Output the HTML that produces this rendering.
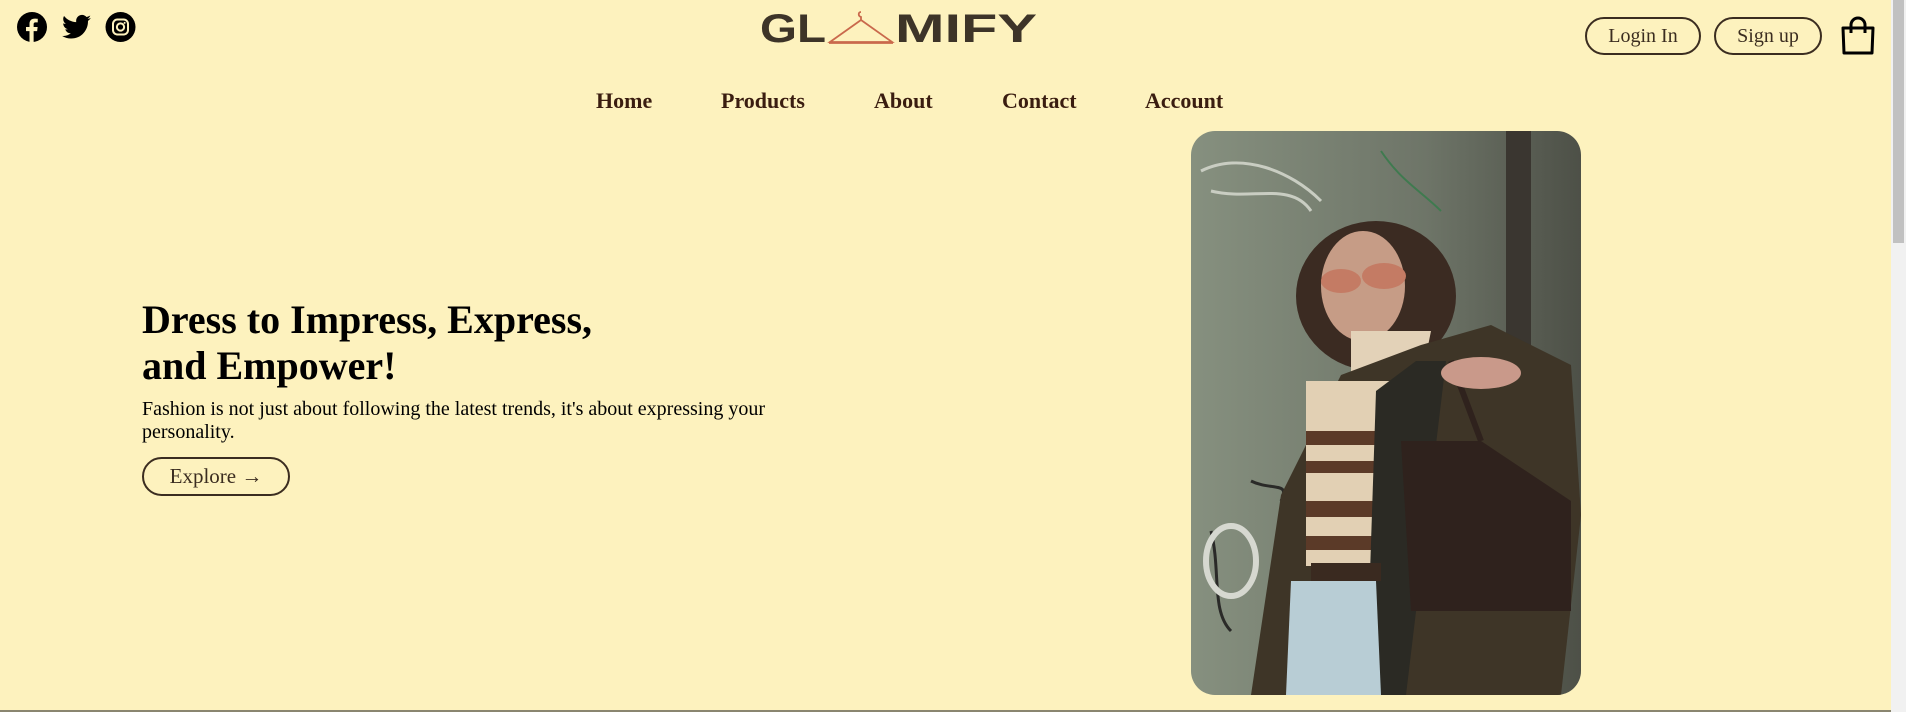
<!DOCTYPE html>
<html><head><meta charset="utf-8"><style>
*{margin:0;padding:0;box-sizing:border-box}
html,body{width:1906px;height:712px;overflow:hidden;background:#fdf2be;font-family:"Liberation Serif",serif;position:relative}
.abs{position:absolute}
.btn{position:absolute;border:2px solid #3b2d20;border-radius:20px;font-size:20px;color:#3b2d20;display:flex;align-items:center;justify-content:center}
.nav a{position:absolute;top:88px;font-weight:bold;font-size:22px;color:#3a1d10;text-decoration:none}
</style></head><body>
<svg class="abs" style="left:17px;top:12px" width="30" height="30" viewBox="0 0 24 24"><circle cx="12" cy="12" r="12" fill="#000"/><path d="M13.3 24v-8.7h2.8l.4-3.3h-3.2V9.9c0-.9.3-1.6 1.6-1.6h1.7V5.4c-.3 0-1.3-.1-2.5-.1-2.5 0-4.1 1.5-4.1 4.2V12H7.2v3.3H10V24z" fill="#fdf2be"/></svg>
<svg class="abs" style="left:62px;top:14px" width="29" height="26" viewBox="0 0 24 20"><path d="M24 2.4c-.9.4-1.8.7-2.8.8 1-.6 1.8-1.6 2.2-2.7-1 .6-2 1-3.1 1.2C19.3.7 18 0 16.6 0c-2.7 0-4.9 2.2-4.9 4.9 0 .4 0 .8.1 1.1C7.7 5.8 4.1 3.9 1.7.9c-.4.7-.7 1.6-.7 2.5 0 1.7.9 3.2 2.2 4.1-.8 0-1.6-.2-2.2-.6v.1c0 2.4 1.7 4.4 3.9 4.8-.4.1-.8.2-1.3.2-.3 0-.6 0-.9-.1.6 2 2.4 3.4 4.6 3.4-1.7 1.3-3.8 2.1-6.1 2.1-.4 0-.8 0-1.2-.1 2.2 1.4 4.8 2.2 7.5 2.2 9.1 0 14-7.5 14-14v-.6c1-.7 1.8-1.6 2.5-2.5z" fill="#000"/></svg>
<svg class="abs" style="left:105px;top:12px" width="31" height="30" viewBox="0 0 24 24"><circle cx="12" cy="12" r="12" fill="#000"/><rect x="6" y="6" width="12" height="12" rx="3.5" fill="none" stroke="#fdf2be" stroke-width="1.6"/><circle cx="12" cy="12" r="2.9" fill="none" stroke="#fdf2be" stroke-width="1.6"/><circle cx="15.3" cy="8.7" r=".8" fill="#fdf2be"/></svg>
<svg class="abs" style="left:755px;top:8px" width="290" height="40" viewBox="0 0 290 40">
<text x="5" y="34" font-family="Liberation Sans,sans-serif" font-weight="bold" font-size="40" fill="#3d3428" textLength="66" lengthAdjust="spacingAndGlyphs">GL</text>
<path d="M106 4c-3 0-3 4 0 5v3M106 12L75 34h62z M74 35h64" fill="none" stroke="#c9694c" stroke-width="1.8"/>
<text x="140" y="34" font-family="Liberation Sans,sans-serif" font-weight="bold" font-size="40" fill="#3d3428" textLength="142" lengthAdjust="spacingAndGlyphs">MIFY</text>
</svg>
<div class="btn" style="left:1585px;top:17px;width:116px;height:38px">Login In</div>
<div class="btn" style="left:1714px;top:17px;width:108px;height:38px">Sign up</div>
<svg class="abs" style="left:1840px;top:16px" width="36" height="40" viewBox="0 0 36 40"><path d="M3 12h30l-1 25H4z" fill="none" stroke="#000" stroke-width="3" stroke-linejoin="round"/><path d="M11 17V9a7 7 0 0 1 14 0v8" fill="none" stroke="#000" stroke-width="3"/></svg>
<div class="abs" style="left:1891px;top:0;width:15px;height:712px;background:#f1f1f1"></div>
<div class="abs" style="left:1893px;top:0;width:11px;height:243px;background:#c1c1c1"></div>
<div class="nav"><a style="left:596px">Home</a><a style="left:721px">Products</a><a style="left:874px">About</a><a style="left:1002px">Contact</a><a style="left:1145px">Account</a></div>
<div class="abs" style="left:142px;top:297px;font-size:40px;font-weight:bold;line-height:46px;color:#000">Dress to Impress, Express,<br>and Empower!</div>
<div class="abs" style="left:142px;top:398px;font-size:20px;line-height:23px;color:#000;width:660px">Fashion is not just about following the latest trends, it's about expressing your personality.</div>
<div class="btn" style="left:142px;top:457px;width:148px;height:39px;font-size:21px">Explore →</div>
<svg class="abs" style="left:1191px;top:131px" width="390" height="564" viewBox="0 0 390 564">
<defs><clipPath id="c"><rect width="390" height="564" rx="24"/></clipPath>
<linearGradient id="bg" x1="0" x2="1"><stop offset="0" stop-color="#86907f"/><stop offset=".6" stop-color="#6e7568"/><stop offset="1" stop-color="#4d5047"/></linearGradient></defs>
<g clip-path="url(#c)">
<rect width="390" height="564" fill="url(#bg)"/>
<rect x="315" y="0" width="25" height="564" fill="#3a3630"/>
<path d="M10 40c40-20 90 0 120 30M20 60c40 10 80-10 100 20" stroke="#c9cdc2" stroke-width="3" fill="none"/>
<path d="M190 20c20 30 40 40 60 60" stroke="#3f7a4f" stroke-width="2" fill="none"/>
<path d="M20 400c10 40 0 80 20 100M60 350c20 10 40 0 30 20" stroke="#2a2a28" stroke-width="3" fill="none"/>
<ellipse cx="40" cy="430" rx="25" ry="35" fill="none" stroke="#d6d8d0" stroke-width="6"/>
<ellipse cx="185" cy="165" rx="80" ry="75" fill="#3b2b22"/>
<ellipse cx="172" cy="155" rx="42" ry="55" fill="#c69c86"/>
<ellipse cx="150" cy="150" rx="20" ry="12" fill="#c47b64"/><ellipse cx="193" cy="145" rx="22" ry="13" fill="#c47b64"/>
<path d="M160 200h80l-10 50h-70z" fill="#e3d2b8"/>
<path d="M60 564l30-200 60-120 80-30 70-20 80 40 10 150-20 180z" fill="#3e3527"/>
<path d="M115 250h85v185h-85z" fill="#e2d0b4"/>
<g fill="#5b3a28"><rect x="115" y="300" width="85" height="14"/><rect x="115" y="330" width="85" height="12"/><rect x="115" y="370" width="85" height="16"/><rect x="115" y="405" width="85" height="14"/></g>
<path d="M185 260l40-30 30 0 -40 334h-40z" fill="#2b2a24"/>
<rect x="120" y="432" width="70" height="18" fill="#3a2a20"/>
<path d="M100 450h85l5 114h-95z" fill="#b8cdd5"/>
<path d="M210 310h80l90 60 0 110-160 0z" fill="#2f221d"/>
<path d="M260 230l30 80" stroke="#2f221d" stroke-width="6"/>
<ellipse cx="290" cy="242" rx="40" ry="16" fill="#c9998a"/>
</g></svg>
<div class="abs" style="left:0;top:710px;width:1891px;height:2px;background:#8a8670"></div>
</body></html>
